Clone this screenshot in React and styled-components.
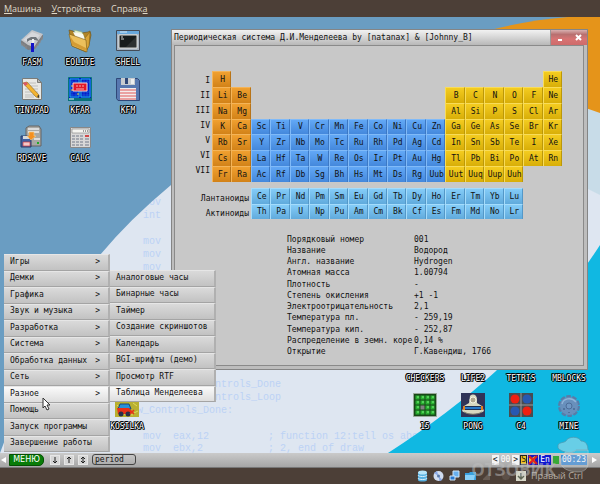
import React from 'react'
import styled, { createGlobalStyle } from "styled-components";


const GlobalStyle = createGlobalStyle`
  * {
    box-sizing: border-box;
  }

  body {
    margin: 0;
    background: #4c3f37;
  }

  button, input {
    font: inherit;
    color: inherit;
    margin: 0;
    padding: 0;
    border: 0;
    background: none;
  }
`;


const Screen = styled.div`
  display: flex;
  flex-direction: column;
  position: relative;
  min-height: 100vh;
  font-family: "DejaVu Sans Mono", monospace;
  font-size: 8px;
  color: #111;
`;

const HostMenu = styled.nav`
  display: flex;
  gap: 10px;
  height: 17px;
  padding: 0 4px;
  align-items: center;
  background: #4c3f37;
  font-family: "Open Sans", sans-serif;
  font-size: 9px;
  color: #dfd8c8;
`;

const Desktop = styled.main`
  position: relative;
  flex: 1;
  min-height: 436px;
  overflow: hidden;
`;

const WallpaperSvg = styled.svg`
  display: block;
  position: absolute;
  inset: 0;
  width: 100%;
  height: 100%;

  text {
    font-family: "Liberation Mono", monospace;
    font-size: 10px;
    white-space: pre;
    fill: #bcd2f5;
  }
`;


// desktop shortcuts

const ShortcutGrid = styled.div`
  position: absolute;
  display: grid;
  grid-template-columns: repeat(${props => props.$columns}, 48px);
  grid-auto-rows: 48px;
`;

const TopShortcuts = styled(ShortcutGrid)`
  left: 8px;
  top: 12px;
`;

const GameShortcuts = styled(ShortcutGrid)`
  right: 7px;
  bottom: 12px;
`;

const LooseShortcuts = styled(ShortcutGrid)`
  left: 103px;
  bottom: 12px;
`;

const ShortcutButton = styled.button`
  display: flex;
  flex-direction: column;
  align-items: center;
  gap: 4px;
  height: 39px;
  color: #fff;
  line-height: 11px;
  text-shadow: 1px 0 #000, -1px 0 #000, 0 1px #000, 0 -1px #000, 1px 1px #000, -1px -1px #000;

  svg {
    display: block;
    flex: none;
  }
`;


// window

const WindowFrame = styled.section`
  position: absolute;
  left: 171px;
  right: 12px;
  top: 12px;
  height: 341px;
  display: flex;
  flex-direction: column;
  padding: 0 3px 3px 2px;
  background: #bdbdbd;
  border: 1px solid #858585;
`;

const TitleBar = styled.header`
  display: flex;
  align-items: center;
  height: 15px;
  margin: 0 -3px 0 -2px;
  background: linear-gradient(#f2f2f2, #b8b8b8);

  h1 {
    flex: 1;
    margin: 0;
    padding-left: 2px;
    font-size: 8px;
    font-weight: 400;
    white-space: nowrap;
  }
`;

const WindowButtons = styled.div`
  display: flex;
  align-self: stretch;
  border-left: 1px solid #999;
  background: linear-gradient(#d8b0b0, #b87070 30%, #d87474 60%, #cf6b6b);

  button {
    display: flex;
    align-items: center;
    justify-content: center;
    width: 18px;
  }
`;

const Client = styled.div`
  flex: 1;
  padding: 25px 20px 0 37px;
  background: #c8c8c8;
  border: 1px solid #8a8a8a;
`;

const MainBlock = styled.div`
  display: flex;
`;

const Periods = styled.div`
  width: 60px;
  margin-left: -60px;
  padding: 2px 2px 0 0;
  line-height: 15px;
  text-align: right;
`;

const ElementGrid = styled.div`
  display: grid;
  flex: none;
  width: ${props => (props.$columns === 18 ? '350px' : '272px')};
  height: ${props => (props.$columns === 18 ? '111px' : '31px')};
  grid-template-columns: repeat(${props => props.$columns}, 1fr);
  grid-auto-rows: 1fr;
`;

const tints = {
  orange: ['#f0a030', '#d28218', '#f4b458', '#b87418'],
  blue: ['#62a8f6', '#4488dc', '#80baf8', '#3c78c4'],
  yellow: ['#f4cc20', '#d8ae08', '#f8dc58', '#bc9808'],
  sky: ['#84ccf8', '#60aadc', '#a4dcfc', '#5498c8'],
};

const ElementCell = styled.button`
  grid-column: ${props => props.$column};
  grid-row: ${props => props.$row};
  min-width: 0;
  background: linear-gradient(${props => tints[props.$tint][0]}, ${props => tints[props.$tint][1]});
  border-top: 1px solid ${props => tints[props.$tint][2]};
  border-left: 1px solid ${props => tints[props.$tint][2]};
  border-right: 1px solid ${props => tints[props.$tint][3]};
  padding-left: 2px;
  line-height: 13px;
  text-align: center;
`;

const SeriesBlock = styled.div`
  display: flex;
  margin-top: 6px;
`;

const SeriesNames = styled.div`
  width: 70px;
  margin-left: -31px;
  padding: 3px 2px 0 0;
  line-height: 15px;
  text-align: right;
`;

const Details = styled.table`
  height: 124px;
  margin: 13px 0 0 75px;
  border-collapse: collapse;
  line-height: 10px;
  white-space: nowrap;

  th {
    width: 127px;
    padding: 0;
    font-weight: 400;
    text-align: left;
  }

  td {
    padding: 0;
  }
`;


// start menu

const MenuPanel = styled.div`
  position: absolute;
  display: grid;
  grid-auto-rows: 1fr;
  width: 106px;
`;

const StartMenu = styled(MenuPanel)`
  left: 4px;
  bottom: 1px;
  height: 198px;
`;

const SubMenu = styled(MenuPanel)`
  left: 110px;
  bottom: 51px;
  height: 132px;
`;

const MenuItem = styled.button`
  display: flex;
  align-items: center;
  justify-content: space-between;
  padding: 0 5px 2px 6px;
  white-space: nowrap;
  background: ${props => (props.$active ? 'linear-gradient(#fafafa, #dedede)' : 'linear-gradient(#dadada, #c2c2c2)')};
  border-top: 1px solid #e6e6e6;
  border-right: 2px solid #b0b0b0;
  border-bottom: 1px solid #a4a4a4;
`;

const Chevron = styled.span`
  margin-right: 3px;
`;

const Pointer = styled.svg`
  position: absolute;
  left: 42px;
  bottom: 42px;
`;


// panel

const Panel = styled.footer`
  display: flex;
  align-items: center;
  gap: 4px;
  height: 15px;
  padding: 0 3px 1px 1px;
  background: linear-gradient(#cacaca, #a6a6a6);
  border-bottom: 1px solid #777;
`;

const PanelArrow = styled.button`
  display: flex;
  width: 5px;
`;

const MenuButton = styled.button`
  width: 35px;
  height: 12px;
  margin-left: -1px;
  background: #087c08;
  border: 1px solid #045004;
  border-radius: 0 5px 5px 0;
  color: #fff;
  font-family: "DejaVu Sans", sans-serif;
  font-size: 8px;
  line-height: 10px;
`;

const SmallButtons = styled.div`
  display: flex;
  gap: 4px;
  margin-left: 2px;
`;

const SmallButton = styled.button`
  display: flex;
  align-items: center;
  justify-content: center;
  width: 10px;
  height: 10px;
  background: #d6d6d6;
  border: 1px solid #e6e6e6;
`;

const TaskButton = styled.button`
  width: 44px;
  height: 11px;
  padding-left: 2px;
  border: 1px solid #444;
  border-radius: 3px;
  font-size: 8px;
  line-height: 9px;
  text-align: left;
`;

const Tray = styled.div`
  display: flex;
  gap: 1px;
  margin: 0 1px 0 auto;
  align-items: center;
`;

const TrayItem = styled.button`
  height: 10px;
  min-width: 7px;
  background: ${props => props.$bg};
  color: ${props => props.$color};
  border: 1px solid ${props => props.$edge || props.$bg};
  line-height: 8px;
  font-size: 8px;
`;

const TrayPicture = styled.svg`
  display: block;
`;

const HostStatus = styled.div`
  display: flex;
  align-items: center;
  justify-content: flex-end;
  gap: 5px;
  height: 16px;
  padding: 0 17px 0 0;
  background: #4c3f37;
  font-family: "Open Sans", sans-serif;
  font-size: 9px;
  color: #b4aca2;

  svg {
    display: block;
  }
`;

const HostKey = styled.span`
  line-height: 14px;
  white-space: nowrap;
`;

const Stamp = styled.div`
  position: absolute;
  right: 10px;
  bottom: 10px;
  display: flex;
  align-items: flex-end;
  pointer-events: none;
  font-family: "Open Sans", sans-serif;
  font-size: 17px;
  font-weight: 700;
  line-height: 17px;
  color: rgba(190, 190, 190, 0.5);

  span {
    margin-bottom: -4px;
  }

  svg {
    display: block;
  }
`;


const main = [
  ['H', 1, 1], ['He', 18, 1],
  ['Li', 1, 2], ['Be', 2, 2],
  ['Na', 1, 3], ['Mg', 2, 3],
];

const shortRows = [
  'B C N O F Ne',
  'Al Si P S Cl Ar',
];

const longRows = [
  'K Ca Sc Ti V Cr Mn Fe Co Ni Cu Zn Ga Ge As Se Br Kr',
  'Rb Sr Y Zr Nb Mo Tc Ru Rh Pd Ag Cd In Sn Sb Te I Xe',
  'Cs Ba La Hf Ta W Re Os Ir Pt Au Hg Tl Pb Bi Po At Rn',
  'Fr Ra Ac Rf Db Sg Bh Hs Mt Ds Rg Uub Uut Uuq Uup Uuh',
];

shortRows.forEach((row, i) => row.split(' ').forEach((name, j) => main.push([name, j + 13, i + 2])));
longRows.forEach((row, i) => row.split(' ').forEach((name, j) => main.push([name, j + 1, i + 4])));

const series = [
  'Ce Pr Nd Pm Sm Eu Gd Tb Dy Ho Er Tm Yb Lu',
  'Th Pa U Np Pu Am Cm Bk Cf Es Fm Md No Lr',
];

const details = [
  ['Порядковый номер', '001'],
  ['Название', 'Водород'],
  ['Англ. название', 'Hydrogen'],
  ['Атомная масса', '1.00794'],
  ['Плотность', '-'],
  ['Степень окисления', '+1 -1'],
  ['Электроотрицательность', '2,1'],
  ['Температура пл.', '- 259,19'],
  ['Температура кип.', '- 252,87'],
  ['Распределение в земн. коре', '0,14 %'],
  ['Открытие', 'Г.Кавендиш, 1766'],
];

const menuItems = [
  ['Игры', true], ['Демки', true], ['Графика', true], ['Звук и музыка', true],
  ['Разработка', true], ['Система', true], ['Обработка данных', true], ['Сеть', true],
  ['Разное', true], ['Помощь', false], ['Запуск программы', false], ['Завершение работы', false],
];

const subItems = [
  'Аналоговые часы', 'Бинарные часы', 'Таймер', 'Создание скриншотов',
  'Календарь', 'BGI-шрифты (демо)', 'Просмотр RTF', 'Таблица Менделеева',
];

// x, baseline, text
const listing = [
  [143, 188, 'mov'],
  [143, 201, 'int'],
  [143, 227, 'mov'],
  [143, 240, 'mov'],
  [143, 253, 'mov'],
  [215, 370, 'ntrols_Done'],
  [215, 383, 'ntrols_Loop'],
  [137, 396, 'w_Controls_Done:'],
  [143, 422, 'mov'],
  [173, 422, 'eax,12'],
  [268, 422, '; function 12:tell os abo'],
  [143, 434, 'mov'],
  [173, 434, 'ebx,2'],
  [268, 434, '; 2, end of draw'],
];

function tintOf(column) {
  if (column < 3) return 'orange';
  return column < 13 ? 'blue' : 'yellow';
}


const art = {
  fasm: (
    <>
      <path d="M1 12L12 2l11 4v3l-8 11-7 1-7-6z" fill="#7c7e82" />
      <path d="M1 11L12 1l11 4-9 13-6-2z" fill="#c4c6ca" />
      <path d="M3 11l9-8 8 3-7 9z" fill="#d6d8dc" />
      <path d="M2 14v3M4 15v3M6 17v3M16 16v3M18 14v3M20 11v3M22 8v3" stroke="#8c8c8c" />
      <path d="M7 10l4-2 5 0 3 4-4-1-5 0-3 2z" fill="#70767c" />
      <path d="M12 10h2v5h-2z" fill="#eceef0" />
      <path d="M11 14h3v9h-3z" fill="#1414c8" />
    </>
  ),
  eolite: (
    <>
      <path d="M1 1l4 1 2 3 13-2 2-1 1 4-2 10-3 7L4 17z" fill="#b08428" stroke="#6c5018" strokeWidth=".6" />
      <path d="M6 1l8 2 4 10-8-2z" fill="#e4f0d0" stroke="#88a868" strokeWidth=".5" />
      <path d="M5 3l10 2 3 9-9-3z" fill="#fafaf0" />
      <path d="M17 9l5-6-1 14-3 5z" fill="#d8a438" stroke="#7c5c18" strokeWidth=".5" />
      <path d="M1 5l17 6 1 12-15-6z" fill="#ecc05c" stroke="#7c5c18" strokeWidth=".6" />
      <path d="M2 7l2 9 14 6v-3L6 13z" fill="#d49c34" />
    </>
  ),
  shell: (
    <>
      <path d="M.5 1.500h23v20h-23z" fill="#a8b4c0" stroke="#444c58" />
      <path d="M1 2h22v3H1z" fill="#68a8dc" />
      <path d="M4 3h7" stroke="#dcecf8" />
      <path d="M3 6h18v13H3z" fill="#181c1c" stroke="#e4e4e0" />
      <path d="M5 8h2M5 10h3" stroke="#d4d4d4" />
      <path d="M10 18L20 8v10z" fill="#2c3030" />
    </>
  ),
  tinypad: (
    <>
      <path d="M2.500 1.500h15l4 4v17h-19z" fill="#e8e8e4" stroke="#7c7c78" />
      <path d="M17.500 1.500v4h4z" fill="#b8b8b4" stroke="#7c7c78" />
      <path d="M5 6h11M5 9h13M5 12h13M5 15h13M5 18h13M5 20h9" stroke="#b4b4b0" strokeWidth=".8" />
      <path d="M3 6l4-1 12 13v3l-3-1z" fill="#f4b430" stroke="#8c6418" strokeWidth=".6" />
      <path d="M3 6l3-1 2 2-3 2z" fill="#d85868" />
      <path d="M17 19l2-1v3z" fill="#333" />
    </>
  ),
  kfar: (
    <>
      <path d="M.5.500h23v23H.5z" fill="#0818c8" stroke="#087878" />
      <path d="M2 2h9v18H2zM13 2h9v18h-9z" fill="none" stroke="#18b8e8" />
      <path d="M2 5h20M2 15h20M2 18h20M4 2v18M8 2v18M16 2v18M19 2v18" stroke="#1878e0" strokeWidth=".5" />
      <path d="M3 9h2M3 13h2M9 17h2" stroke="#f0d030" />
      <path d="M5 6h14v8H5z" fill="#e01828" stroke="#f4d4d4" />
      <path d="M8 9h2M11 9h2M14 9h2M8 12h8" stroke="#f8b0b0" />
      <path d="M0 21h24v3H0z" fill="#087078" />
      <path d="M1 22h5" stroke="#d8f8f8" />
    </>
  ),
  kfm: (
    <>
      <path d="M.5 1.500h21l2 2v20H2l-1.500-2z" fill="#5878b0" stroke="#304878" />
      <path d="M5 1h14v7H5z" fill="#c8ccd0" />
      <path d="M9 1h3v6H9z" fill="#304878" />
      <path d="M15 2h3v5h-3z" fill="#eee" />
      <path d="M4 11h16v12H4z" fill="#f4ecec" />
      <path d="M4 13h16M4 16h16M4 19h16M4 22h16" stroke="#e05858" />
    </>
  ),
  rdsave: (
    <>
      <path d="M6 3l3-2h10l2 3v17H6z" fill="#a8a8a4" stroke="#646464" />
      <path d="M8 4h11M8 7h11M14 14h6" stroke="#dcdcdc" strokeWidth="2" />
      <path d="M17 18h2" stroke="#20a828" strokeWidth="2" />
      <path d="M1 11h10v11H1z" fill="#4060a0" stroke="#283c68" />
      <path d="M3 11h6v3H3z" fill="#d4d8dc" />
      <path d="M3 17h7v4H3z" fill="#f4c8c8" stroke="#c83840" strokeWidth=".7" />
      <path d="M9 7h5v4h2l-5 4-4-4h2z" fill="#f49020" stroke="#f8d088" strokeWidth=".6" />
    </>
  ),
  calc: (
    <>
      <path d="M2.500 2.500h20v20h-20z" fill="#d8d8d8" stroke="#888" />
      <path d="M4 4h17v4H4z" fill="#f4f4f0" stroke="#8c8c8c" strokeWidth=".7" />
      <path d="M15 6h1M17 6h1M19 6h1" stroke="#444" />
      <path d="M4 11h3M8 11h3M12 11h3M4 14h3M8 14h3M12 14h3M4 17h3M8 17h3M12 17h3M4 20h3M8 20h3M12 20h3M17 14h4M17 17h4M17 20h4" stroke="#a4a8b0" strokeWidth="2" />
      <path d="M17 11h4" stroke="#d04848" strokeWidth="2" />
    </>
  ),
  kosilka: (
    <>
      <path d="M0 1h24v23H0z" fill="#b8b030" />
      <path d="M2 12l3 3M18 10l4 3M8 21l10 1M19 20l4-2" stroke="#e0d858" />
      <path d="M5 11h9l2 5H3z" fill="#2890d8" stroke="#184878" />
      <path d="M2 15h12l2 3v3H3z" fill="#e83018" />
      <circle cx="6" cy="21" r="2.500" fill="#28304c" />
      <circle cx="13" cy="21" r="2.500" fill="#28304c" />
      <path d="M15 17l4 4M19 17l-4 4" stroke="#e83018" strokeWidth="1.500" />
    </>
  ),
  fifteen: (
    <>
      <path d="M.5.500h23v23H.5z" fill="#184818" stroke="#98a898" />
      {[0, 1, 2, 3].map(y => [0, 1, 2, 3].map(x => (
        <g key={`${x}${y}`} transform={`translate(${2 + x * 5} ${2 + y * 5})`}>
          <path d="M.5.500h4v4h-4z" fill={x === 1 && y === 2 ? '#808080' : '#28b030'} />
          {!(x === 1 && y === 2) && <path d="M2 2h2" stroke="#80f080" />}
        </g>
      )))}
    </>
  ),
  pong: (
    <>
      <path d="M0 0h24v24H0z" fill="#303458" />
      <path d="M9 3c3-3 7-1 7 3v4l5 3 2 5c-4 4-18 4-22 0l2-5 5-3z" fill="#d8d8c0" />
      <circle cx="12" cy="7" r="3" fill="#b0a890" stroke="#f4f4e4" />
      <path d="M3 13.500h18v3H3z" fill="#2878c8" stroke="#203050" />
      <path d="M3 13v4M21 13v4" stroke="#e08020" strokeWidth="2" />
      <path d="M3 19c5 3 13 3 18 0" stroke="#787868" fill="none" />
    </>
  ),
  four: (
    <>
      <path d="M0 0h24v24H0z" fill="#484c50" />
      <path d="M12 0v24M0 12h24" stroke="#989c9c" />
      <circle cx="6" cy="6" r="4.500" fill="#f02010" />
      <circle cx="18" cy="6" r="4.500" fill="#2858b0" />
      <circle cx="6" cy="18" r="4.500" fill="#2858b0" />
      <circle cx="18" cy="18" r="4.500" fill="#f02010" />
    </>
  ),
  mine: (
    <>
      <circle cx="12" cy="13" r="9.500" fill="#6890bc" stroke="#587ca8" strokeWidth="3" strokeDasharray="4.500 1.470" />
      <circle cx="12" cy="13" r="9" fill="#6890bc" />
      <path d="M5 11c1-5 9-8 14-2" stroke="#90b4d8" fill="none" strokeWidth="1.500" />
      <circle cx="12" cy="13" r="3" fill="#7098c4" stroke="#4c6c98" />
      <path d="M6 16h2M16 16h2M12 19v1" stroke="#38547c" />
    </>
  ),
};

function Shortcut({ name, icon }) {
  return (
    <ShortcutButton>
      <svg width="24" height="24" viewBox="0 0 24 24" aria-hidden="true">{art[icon]}</svg>
      <span>{name}</span>
    </ShortcutButton>
  )
}

function Wallpaper() {
  return (
    <WallpaperSvg viewBox="0 0 600 436" preserveAspectRatio="xMidYMid slice" aria-hidden="true">
      <path d="M0 0h600v436H0z" fill="#dee6f1" />
      {listing.map(([x, y, line]) => <text key={`${x}-${y}`} x={x} y={y}>{line}</text>)}
      <path d="M0 0h600v20L300 90Q230 120 171 168Q130 202 100 238L40 330 0 436z" fill="#6a9dc2" />
      <path d="M480 40L600 90v88L560 158z" fill="#c8dce8" />
      <path d="M490 13Q530 3 568 0h32v96L560 82z" fill="#e5941a" />
      <path d="M388 436Q450 396 496 354 560 290 600 228v208z" fill="#10b8e2" />
    </WallpaperSvg>
  )
}

function PeriodicWindow() {
  return (
    <WindowFrame>
      <TitleBar>
        <h1>Периодическая система Д.И.Менделеева by [natanax] &amp; [Johnny_B]</h1>
        <WindowButtons>
          <button aria-label="Свернуть">
            <svg width="6" height="8"><path d="M1 6h4" stroke="#fff" strokeWidth="2" /></svg>
          </button>
          <button aria-label="Закрыть">
            <svg width="7" height="7"><path d="M1 1l5 5M6 1L1 6" stroke="#fff" strokeWidth="2" /></svg>
          </button>
        </WindowButtons>
      </TitleBar>
      <Client>
        <MainBlock>
          <Periods>
            {['I', 'II', 'III', 'IV', 'V', 'VI', 'VII'].map(p => <div key={p}>{p}</div>)}
          </Periods>
          <ElementGrid $columns={18}>
            {main.map(([name, column, row]) => (
              <ElementCell key={name} $column={column} $row={row} $tint={tintOf(column)}>{name}</ElementCell>
            ))}
          </ElementGrid>
        </MainBlock>
        <SeriesBlock>
          <SeriesNames>
            <div>Лантаноиды</div>
            <div>Актиноиды</div>
          </SeriesNames>
          <ElementGrid $columns={14}>
            {series.map((row, i) => row.split(' ').map((name, j) => (
              <ElementCell key={name} $column={j + 1} $row={i + 1} $tint="sky">{name}</ElementCell>
            )))}
          </ElementGrid>
        </SeriesBlock>
        <Details>
          <tbody>
            {details.map(([name, value]) => (
              <tr key={name}>
                <th scope="row">{name}</th>
                <td>{value}</td>
              </tr>
            ))}
          </tbody>
        </Details>
      </Client>
    </WindowFrame>
  )
}

function TaskPanel() {
  return (
    <Panel>
      <PanelArrow aria-label="Влево"><svg width="5" height="6"><path d="M5 0v6L0 3z" fill="#fff" /></svg></PanelArrow>
      <MenuButton>МЕНЮ</MenuButton>
      <SmallButtons>
        <SmallButton aria-label="Вниз">
          <svg width="6" height="8"><path d="M3 1v6M1 5l2 2 2-2" stroke="#222" fill="none" /></svg>
        </SmallButton>
        <SmallButton aria-label="Вверх">
          <svg width="6" height="8"><path d="M3 7V1M1 3l2-2 2 2" stroke="#222" fill="none" /></svg>
        </SmallButton>
        <SmallButton aria-label="Развернуть">
          <svg width="6" height="8"><path d="M3 7V1M1 3l2-2 2 2M1 5l2 2 2-2" stroke="#222" fill="none" /></svg>
        </SmallButton>
      </SmallButtons>
      <TaskButton>period</TaskButton>
      <Tray>
        <TrayItem $bg="#f4f4f4" $color="#111">&lt;</TrayItem>
        <TrayItem $bg="transparent" $color="#fff">00</TrayItem>
        <TrayItem $bg="#f4f4f4" $color="#111">&gt;</TrayItem>
        <TrayItem $bg="#f0c020" $color="#222" $edge="#222">S</TrayItem>
        <TrayPicture width="10" height="10">
          <path d="M0 0h10v10H0z" fill="#1818c0" />
          <path d="M1 3h3l3-2v8L4 7H1z" fill="#f0c020" />
          <path d="M1 1l8 8M9 1L1 9" stroke="#e02020" strokeWidth="2" />
        </TrayPicture>
        <TrayItem $bg="#1018d0" $color="#fff">En</TrayItem>
        <TrayPicture width="8" height="10"><path d="M1 1h6v8H1z" fill="#38a838" /></TrayPicture>
        <TrayItem $bg="#4088d0" $color="#fff">00:23</TrayItem>
      </Tray>
      <PanelArrow aria-label="Вправо"><svg width="5" height="6"><path d="M0 0v6l5-3z" fill="#fff" /></svg></PanelArrow>
    </Panel>
  )
}

function StatusIcons() {
  return (
    <>
      <svg width="11" height="12" viewBox="0 0 11 12">
        <path d="M1 2v8c0 2 9 2 9 0V2z" fill="#58b0e0" />
        <ellipse cx="5.500" cy="2.500" rx="4.500" ry="2" fill="#b8e4f8" />
        <path d="M1 5c0 2 9 2 9 0M1 8c0 2 9 2 9 0" stroke="#d8f0fc" fill="none" />
      </svg>
      <svg width="11" height="12" viewBox="0 0 11 12">
        <circle cx="5.500" cy="6" r="5" fill="#d0dcf0" />
        <path d="M5.500 6L1 3l3-2zM5.500 6l4 4-3 1z" fill="#88a8e8" />
        <circle cx="5.500" cy="6" r="1.500" fill="#5878a8" />
      </svg>
      <svg width="11" height="12" viewBox="0 0 11 12">
        <path d="M4 1h6v6H4z" fill="#68b0f0" stroke="#d0e8fc" />
        <path d="M1 6h5v4H1z" fill="#2878d0" stroke="#d0e8fc" />
      </svg>
      <svg width="11" height="12" viewBox="0 0 11 12">
        <path d="M0 3h4l1-1h6v8H0z" fill="#38a0e0" />
        <path d="M0 5h10l-1 5H0z" fill="#88d0f8" />
      </svg>
      <svg width="11" height="12" viewBox="0 0 11 12">
        <path d="M2 9l7-7v8H2z" fill="#685c54" />
      </svg>
      <svg width="14" height="12" viewBox="0 0 14 12">
        <circle cx="9" cy="6" r="4" fill="#5c5048" />
      </svg>
      <svg width="10" height="12" viewBox="0 0 10 12">
        <path d="M0 1h10v10H0z" fill="#d8d8c8" />
        <path d="M5 3v5M2 6l3 3 3-3" stroke="#606858" fill="none" strokeWidth="1.500" />
      </svg>
    </>
  )
}

function App() {
  return (
    <Screen>
      <GlobalStyle />
      <HostMenu>
        <span><u>М</u>ашина</span>
        <span><u>У</u>стройства</span>
        <span>Справк<u>а</u></span>
      </HostMenu>

      <Desktop>
        <Wallpaper />
        <TopShortcuts $columns={3}>
          <Shortcut name="FASM" icon="fasm" />
          <Shortcut name="EOLITE" icon="eolite" />
          <Shortcut name="SHELL" icon="shell" />
          <Shortcut name="TINYPAD" icon="tinypad" />
          <Shortcut name="KFAR" icon="kfar" />
          <Shortcut name="KFM" icon="kfm" />
          <Shortcut name="RDSAVE" icon="rdsave" />
          <Shortcut name="CALC" icon="calc" />
        </TopShortcuts>
        <LooseShortcuts $columns={1}>
          <Shortcut name="KOSILKA" icon="kosilka" />
        </LooseShortcuts>
        <GameShortcuts $columns={4}>
          <Shortcut name="CHECKERS" />
          <Shortcut name="LIFE2" />
          <Shortcut name="TETRIS" />
          <Shortcut name="MBLOCKS" />
          <Shortcut name="15" icon="fifteen" />
          <Shortcut name="PONG" icon="pong" />
          <Shortcut name="C4" icon="four" />
          <Shortcut name="MINE" icon="mine" />
        </GameShortcuts>

        <PeriodicWindow />

        <StartMenu>
          {menuItems.map(([name, nested]) => (
            <MenuItem key={name} $active={name === 'Разное'}>
              <span>{name}</span>
              {nested && <Chevron>&gt;</Chevron>}
            </MenuItem>
          ))}
        </StartMenu>
        <SubMenu>
          {subItems.map(name => (
            <MenuItem key={name} $active={name === 'Таблица Менделеева'}>{name}</MenuItem>
          ))}
        </SubMenu>
        <Pointer width="10" height="14" viewBox="0 0 10 14">
          <path d="M1 1v10l2-2 2 4 2-1-2-4h3z" fill="#fff" stroke="#333" />
        </Pointer>
      </Desktop>

      <TaskPanel />
      <HostStatus>
        <StatusIcons />
        <HostKey>Правый Ctrl</HostKey>
      </HostStatus>

      <Stamp>
        <span>ОТЗОВИК</span>
        <svg width="34" height="38" viewBox="0 0 34 38">
          <path d="M2 9C3 6 8 7 10 5c2-5 13-5 15 0 5 0 7 4 7 9H20c-4 5-15 2-18-2z" fill="#a4dcea" fillOpacity=".6" stroke="#4c9cb4" strokeOpacity=".8" />
          <path d="M9 16c3 1 8 1 11-2h12c1 3-1 5-1 8 3 7 0 14-9 14S3 32 5 24c1-3 4-5 4-8z" fill="#d0dce0" fillOpacity=".25" stroke="#d8dcdc" strokeOpacity=".35" />
        </svg>
      </Stamp>
    </Screen>
  )
}


export default App
